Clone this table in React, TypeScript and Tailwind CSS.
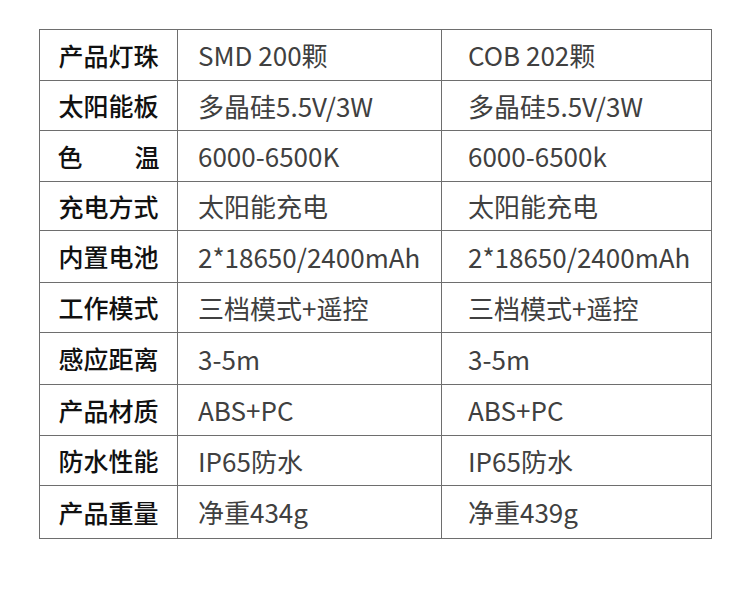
import { Fragment } from "react";

const rows = [
  { label: "产品灯珠", a: "SMD 200颗", b: "COB 202颗", h: "h-[50px]" },
  { label: "太阳能板", a: "多晶硅5.5V/3W", b: "多晶硅5.5V/3W", h: "h-[49px]" },
  { label: "色温", a: "6000-6500K", b: "6000-6500k", h: "h-[50px]", spread: true },
  { label: "充电方式", a: "太阳能充电", b: "太阳能充电", h: "h-[48px]" },
  { label: "内置电池", a: "2*18650/2400mAh", b: "2*18650/2400mAh", h: "h-[51px]" },
  { label: "工作模式", a: "三档模式+遥控", b: "三档模式+遥控", h: "h-[49px]" },
  { label: "感应距离", a: "3-5m", b: "3-5m", h: "h-[51px]" },
  { label: "产品材质", a: "ABS+PC", b: "ABS+PC", h: "h-[50px]" },
  { label: "防水性能", a: "IP65防水", b: "IP65防水", h: "h-[49px]" },
  { label: "产品重量", a: "净重434g", b: "净重439g", h: "h-[52px]" },
];

export default function App() {
  return (
    <div
      className="w-[750px] h-[593px] bg-white pt-[29px] pl-[39px]"
      style={{ fontFamily: '"Noto Sans CJK SC", "Noto Sans", sans-serif' }}
    >
      <div className="w-[673px] grid grid-cols-[137px_263px_269px] gap-px p-px bg-[#6e6e6e]">
        {rows.map((r) => (
          <Fragment key={r.label}>
            <div className={`${r.h} bg-white flex items-center justify-center`}>
              {r.spread ? (
                <div className="w-[102px] flex justify-between text-[25px] font-medium text-[#111] leading-none">
                  <span>色</span>
                  <span>温</span>
                </div>
              ) : (
                <span className="text-[25px] font-medium text-[#111] leading-none">{r.label}</span>
              )}
            </div>
            <div className={`${r.h} bg-white flex items-center pl-[20px] text-[26px] text-[#404040] leading-none`}>
              {r.a}
            </div>
            <div className={`${r.h} bg-white flex items-center pl-[26px] text-[26px] text-[#404040] leading-none`}>
              {r.b}
            </div>
          </Fragment>
        ))}
      </div>
    </div>
  );
}
